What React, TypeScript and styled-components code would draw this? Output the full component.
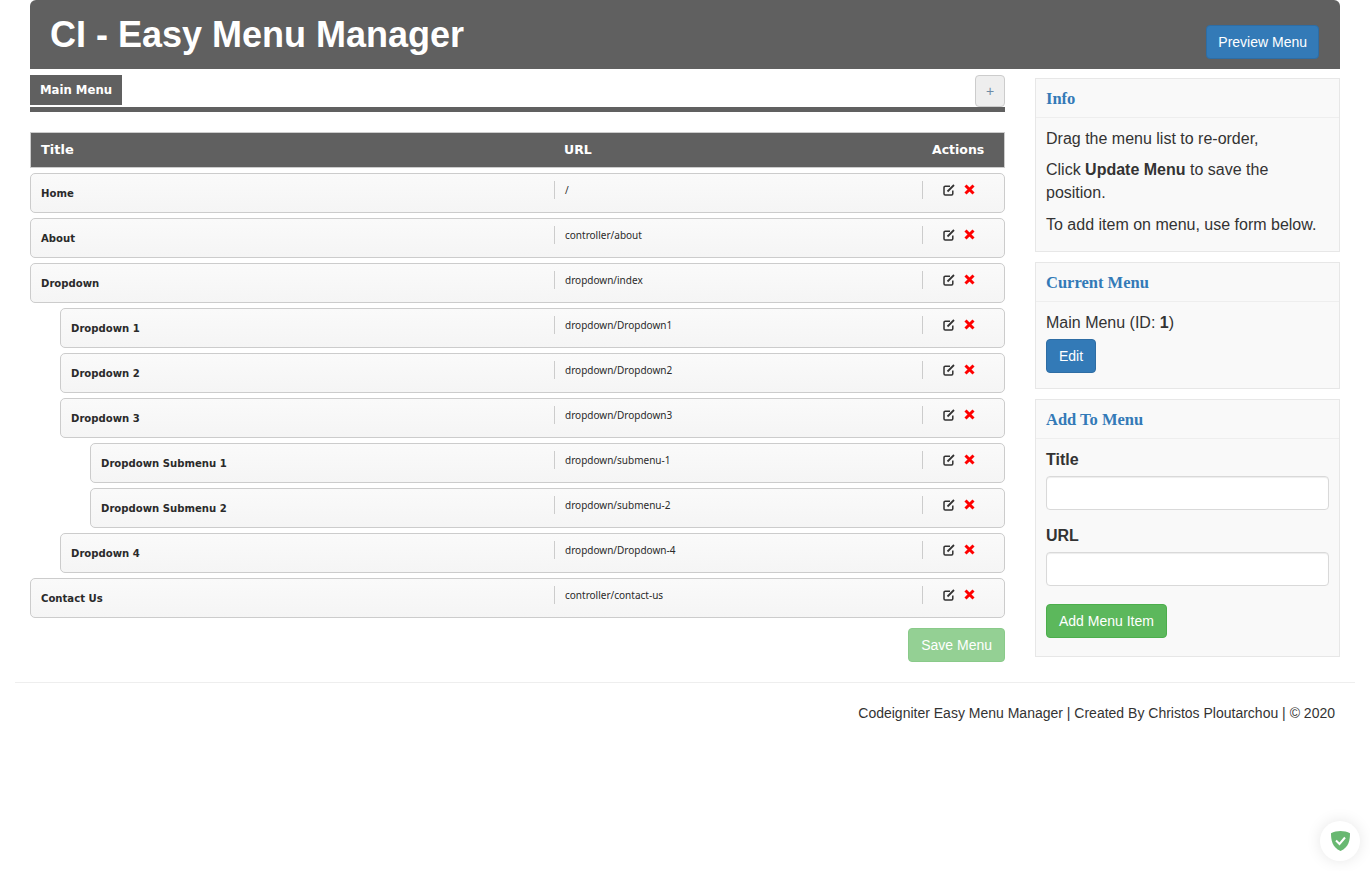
import React from "react";
import styled, { createGlobalStyle } from "styled-components";

const GlobalStyle = createGlobalStyle`
  * {
    box-sizing: border-box;
  }
  body {
    margin: 0;
    background: #fff;
    color: #333;
    font-family: "Liberation Sans", Arial, sans-serif;
    font-size: 14px;
    line-height: 20px;
  }
`;

const Page = styled.div`
  min-height: 871px;
  padding: 0 15px;
`;

const Header = styled.header`
  height: 69px;
  margin: 0 15px;
  padding: 0 21px 10px 20px;
  display: flex;
  justify-content: space-between;
  align-items: flex-end;
  background: #606060;
  border-radius: 6px 6px 0 0;
`;

const HeaderTitle = styled.h1`
  align-self: flex-start;
  margin: 15px 0 0;
  color: #fff;
  font-size: 36px;
  font-weight: 700;
  line-height: 40px;
`;

const Button = styled.button<{ $tone: "blue" | "green"; $faded?: boolean }>`
  height: 34px;
  padding: 0 12px;
  border: 1px solid ${(p) => (p.$tone === "blue" ? "#2e6da4" : "#4cae4c")};
  border-radius: 4px;
  background: ${(p) => (p.$tone === "blue" ? "#337ab7" : "#5cb85c")};
  color: #fff;
  font-family: inherit;
  font-size: 14px;
  opacity: ${(p) => (p.$faded ? 0.65 : 1)};
`;

const PreviewButton = styled(Button)`
  padding: 0 11px;
`;

const Main = styled.main`
  margin: 0 15px;
  padding-top: 6px;
  display: grid;
  grid-template-columns: 975px 305px;
  column-gap: 30px;
`;

const TabBar = styled.div`
  height: 37px;
  display: flex;
  justify-content: space-between;
  border-bottom: 5px solid #606060;
`;

const Tab = styled.div`
  width: 92px;
  height: 30px;
  background: #606060;
  color: #fff;
  font-family: "DejaVu Sans", Verdana, sans-serif;
  font-size: 11.7px;
  font-weight: 700;
  line-height: 30px;
  text-align: center;
`;

const AddTabButton = styled.button`
  width: 30px;
  height: 32px;
  padding: 0;
  border: 1px solid #ccc;
  border-radius: 4px;
  background: #eee;
  color: #6d8aa5;
  font-family: inherit;
  font-size: 14px;
`;

const HeadRow = styled.div`
  height: 36px;
  margin: 20px 0 5px;
  display: flex;
  align-items: center;
  border: 1px solid #ccc;
  background: #606060;
  color: #fff;
  font-family: "DejaVu Sans", Verdana, sans-serif;
  font-weight: 700;
`;

const HeadTitle = styled.div`
  flex: 1;
  padding-left: 10px;
  font-size: 13px;
`;

const HeadUrl = styled.div`
  width: 368px;
  padding-left: 10px;
  font-size: 12.5px;
`;

const HeadActions = styled.div`
  width: 82px;
  padding-left: 10px;
  font-size: 12.5px;
`;

const Row = styled.div<{ $level: number }>`
  height: 40px;
  margin: 0 0 5px ${(p) => p.$level * 30}px;
  display: flex;
  border: 1px solid #ccc;
  border-radius: 5px;
  background: linear-gradient(#fafafa, #f5f5f5);
`;

const RowTitle = styled.div`
  flex: 1;
  padding-left: 10px;
  color: #2a2a2a;
  font-family: "DejaVu Sans", Verdana, sans-serif;
  font-size: 10.1px;
  font-weight: 700;
  line-height: 40px;
`;

const RowUrl = styled.div`
  width: 368px;
  height: 18px;
  margin-top: 7px;
  padding-left: 10px;
  border-left: 1px solid #ccc;
  color: #2a2a2a;
  font-family: "Noto Sans", Tahoma, sans-serif;
  font-size: 10px;
  line-height: 18px;
`;

const RowActions = styled.div`
  width: 82px;
  height: 18px;
  margin-top: 7px;
  padding: 0 0 1px 20px;
  display: flex;
  align-items: center;
  gap: 9px;
  border-left: 1px solid #ccc;
`;

const EditIcon = styled.svg`
  width: 12px;
  height: 12px;
  fill: none;
  stroke: #333;
  stroke-width: 1.5;
`;

const DeleteIcon = styled.svg`
  width: 11px;
  height: 11px;
  fill: none;
  stroke: #f00;
  stroke-width: 3;
`;

const SaveRow = styled.div`
  margin-top: 10px;
  display: flex;
  justify-content: flex-end;
`;

const Sidebar = styled.aside`
  padding-top: 3px;
  display: flex;
  flex-direction: column;
  gap: 10px;
`;

const Panel = styled.section`
  border: 1px solid #e7e7e7;
  background: #f9f9f9;
`;

const PanelHeading = styled.h3`
  height: 39px;
  margin: 0;
  padding-left: 10px;
  border-bottom: 1px solid #eee;
  color: #337ab7;
  font-family: "Liberation Serif", Cambria, serif;
  font-size: 16.5px;
  font-weight: 700;
  line-height: 40px;
`;

const PanelBody = styled.div<{ $bottom: number }>`
  padding: 9.6px 10px ${(p) => p.$bottom}px;
  font-size: 16px;
  line-height: 22.857px;
`;

const Paragraph = styled.p`
  margin: 0 0 9px;
`;

const CurrentLine = styled.div`
  margin-bottom: 4px;
`;

const Label = styled.label`
  display: block;
  margin-bottom: 4px;
  font-weight: 700;
`;

const Input = styled.input`
  display: block;
  width: 100%;
  height: 34px;
  margin-bottom: 15px;
  border: 1px solid #d9d9d9;
  border-radius: 4px;
  background: #fff;
  box-shadow: inset 0 1px 1px rgba(0, 0, 0, 0.075);
`;

const AddItemButton = styled(Button)`
  margin-top: 18px;
  display: block;
`;

const Footer = styled.footer`
  margin-top: 20px;
  padding: 20px 20px 0 0;
  border-top: 1px solid #eee;
  text-align: right;
`;

const ShieldBadge = styled.div`
  position: absolute;
  left: 1320px;
  top: 821px;
  width: 40px;
  height: 40px;
  display: flex;
  align-items: center;
  justify-content: center;
  border-radius: 50%;
  background: #fff;
  box-shadow: 0 0 15px rgba(0, 0, 0, 0.1);
`;

interface IMenuItem {
  title: string;
  url: string;
  level: number;
}

const items: IMenuItem[] = [
  { title: "Home", url: "/", level: 0 },
  { title: "About", url: "controller/about", level: 0 },
  { title: "Dropdown", url: "dropdown/index", level: 0 },
  { title: "Dropdown 1", url: "dropdown/Dropdown1", level: 1 },
  { title: "Dropdown 2", url: "dropdown/Dropdown2", level: 1 },
  { title: "Dropdown 3", url: "dropdown/Dropdown3", level: 1 },
  { title: "Dropdown Submenu 1", url: "dropdown/submenu-1", level: 2 },
  { title: "Dropdown Submenu 2", url: "dropdown/submenu-2", level: 2 },
  { title: "Dropdown 4", url: "dropdown/Dropdown-4", level: 1 },
  { title: "Contact Us", url: "controller/contact-us", level: 0 },
];

function App() {
  return (
    <Page>
      <GlobalStyle />
      <Header>
        <HeaderTitle>CI - Easy Menu Manager</HeaderTitle>
        <PreviewButton $tone="blue">Preview Menu</PreviewButton>
      </Header>
      <Main>
        <div>
          <TabBar>
            <Tab>Main Menu</Tab>
            <AddTabButton>+</AddTabButton>
          </TabBar>
          <HeadRow>
            <HeadTitle>Title</HeadTitle>
            <HeadUrl>URL</HeadUrl>
            <HeadActions>Actions</HeadActions>
          </HeadRow>
          {items.map((item) => (
            <Row $level={item.level} key={item.title}>
              <RowTitle>{item.title}</RowTitle>
              <RowUrl>{item.url}</RowUrl>
              <RowActions>
                <EditIcon viewBox="0 0 12 12">
                  <path d="M7 2.200H2.200A1.200 1.200 0 0 0 1 3.400V9.800A1.200 1.200 0 0 0 2.200 11H8.600A1.200 1.200 0 0 0 9.800 9.800V6.500" />
                  <path d="M4.500 7.500 11 1" strokeWidth="1.8" />
                </EditIcon>
                <DeleteIcon viewBox="0 0 11 11">
                  <path d="M1.500 1.500 9.500 9.500M9.500 1.500 1.500 9.500" />
                </DeleteIcon>
              </RowActions>
            </Row>
          ))}
          <SaveRow>
            <Button $tone="green" $faded>
              Save Menu
            </Button>
          </SaveRow>
        </div>
        <Sidebar>
          <Panel>
            <PanelHeading>Info</PanelHeading>
            <PanelBody $bottom={5.4}>
              <Paragraph>Drag the menu list to re-order,</Paragraph>
              <Paragraph>
                Click <b>Update Menu</b> to save the position.
              </Paragraph>
              <Paragraph>To add item on menu, use form below.</Paragraph>
            </PanelBody>
          </Panel>
          <Panel>
            <PanelHeading>Current Menu</PanelHeading>
            <PanelBody $bottom={15.5}>
              <CurrentLine>
                Main Menu (ID: <b>1</b>)
              </CurrentLine>
              <Button $tone="blue">Edit</Button>
            </PanelBody>
          </Panel>
          <Panel>
            <PanelHeading>Add To Menu</PanelHeading>
            <PanelBody $bottom={18}>
              <Label>Title</Label>
              <Input />
              <Label>URL</Label>
              <Input />
              <AddItemButton $tone="green">Add Menu Item</AddItemButton>
            </PanelBody>
          </Panel>
        </Sidebar>
      </Main>
      <Footer>
        Codeigniter Easy Menu Manager | Created By Christos Ploutarchou | © 2020
      </Footer>
      <ShieldBadge>
        <svg width="21" height="22" viewBox="0 0 21 22">
          <path
            d="M10.500 1C7.500 1 3.500 1.800 1 3.200 1 10 2 17 10.500 21 19 17 20 10 20 3.200 17.500 1.800 13.500 1 10.500 1Z"
            fill="#68b871"
          />
          <path d="M6 10.500 9.500 14 15 7.500" fill="none" stroke="#fff" strokeWidth="2" />
        </svg>
      </ShieldBadge>
    </Page>
  );
}

export default App;
